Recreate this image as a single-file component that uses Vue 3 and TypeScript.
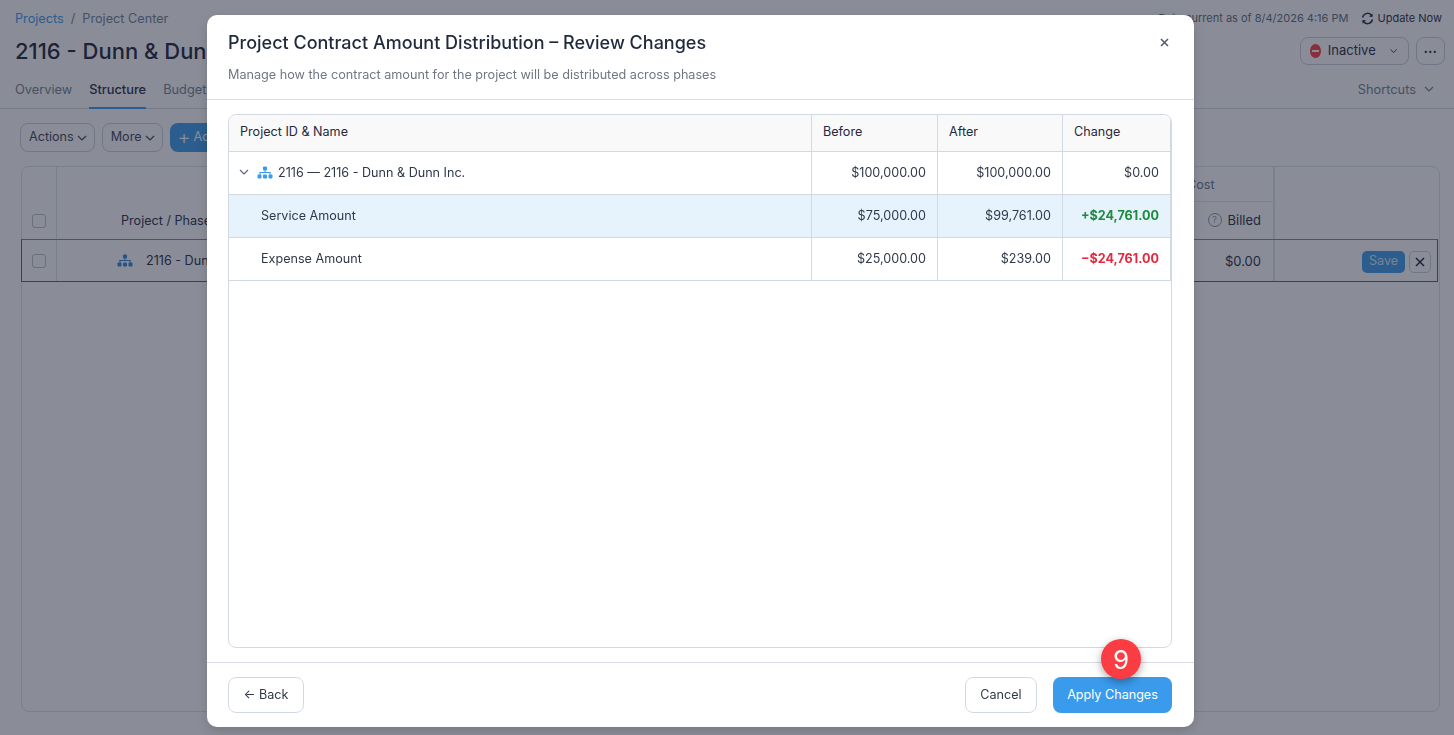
<template>
  <div class="page">
    <div class="top">
      <div class="crumbs">
        <a class="link">Projects</a>
        <span class="sep">/</span>
        <span>Project Center</span>
      </div>
      <div class="sync">
        <span class="current">Data current as of 8/4/2026 4:16 PM</span>
        <span class="update">
          <svg width="13" height="13" viewBox="0 0 16 16" fill="none" stroke="currentColor" stroke-width="1.800">
            <path d="M2 7a6 6 0 0 1 10.500-3.200L14 5.500M14 9a6 6 0 0 1-10.500 3.200L2 10.500" />
            <path d="M14 1.500v4.200H9.800M2 14.500v-4.200h4.200" fill="currentColor" stroke="none" />
          </svg>
          Update Now
        </span>
      </div>
    </div>
    <div class="title-row">
      <h1>2116 - Dunn &amp; Dunn Inc.</h1>
      <div class="title-actions">
        <button class="status">
          <span class="dot"><i /></span>
          Inactive
          <svg class="chev wide" viewBox="0 0 12 12"><path d="M2 4l4 4 4-4" /></svg>
        </button>
        <button class="dots">•••</button>
      </div>
    </div>
    <div class="tabs">
      <span v-for="t in tabs" :key="t" class="tab" :class="{ active: t === 'Structure' }">{{ t }}</span>
      <span class="shortcuts">
        Shortcuts
        <svg class="chev wide" viewBox="0 0 12 12"><path d="M2 4l4 4 4-4" /></svg>
      </span>
    </div>
    <div class="toolbar">
      <button class="tool">Actions <svg class="chev" viewBox="0 0 12 12"><path d="M2 4l4 4 4-4" /></svg></button>
      <button class="tool">More <svg class="chev" viewBox="0 0 12 12"><path d="M2 4l4 4 4-4" /></svg></button>
      <button class="add"><span class="plus">+</span> Add Phase</button>
    </div>
    <div class="grid-card">
      <div class="grid-head">
        <div class="g-check"><span class="box" /></div>
        <div class="g-name">Project / Phase</div>
        <div class="g-cost">
          <div class="cost-label">Cost</div>
          <div class="cost-sub">
            <span class="help">?</span>
            Billed
          </div>
        </div>
        <div class="g-actions" />
      </div>
      <div class="grid-row">
        <div class="g-check"><span class="box" /></div>
        <div class="g-name row-name">
          <svg class="tree" width="16" height="13" viewBox="0 0 16 13" fill="currentColor">
            <rect x="6" y="0.500" width="4" height="4" rx="1" />
            <rect x="7.500" y="4" width="1" height="3" />
            <rect x="2.500" y="6" width="11" height="1" />
            <rect x="2.500" y="6" width="1" height="3" />
            <rect x="12.500" y="6" width="1" height="3" />
            <rect x="0.500" y="8.500" width="4" height="4" rx="1" />
            <rect x="6" y="8.500" width="4" height="4" rx="1" />
            <rect x="11.500" y="8.500" width="4" height="4" rx="1" />
          </svg>
          2116 - Dunn &amp; Dunn Inc.
        </div>
        <div class="g-cost row-cost">$0.00</div>
        <div class="g-actions row-actions">
          <button class="save">Save</button>
          <button class="close-row">
            <svg width="10" height="10" viewBox="0 0 10 10" stroke="currentColor" stroke-width="1.500"><path d="M1 1l8 8M9 1l-8 8" /></svg>
          </button>
        </div>
      </div>
    </div>
  </div>

  <div class="backdrop" />

  <div class="modal">
    <header class="m-head">
      <h2>Project Contract Amount Distribution – Review Changes</h2>
      <p>Manage how the contract amount for the project will be distributed across phases</p>
      <svg class="m-close" width="9" height="9" viewBox="0 0 9 9" stroke="currentColor" stroke-width="1.500"><path d="M1 1l7 7M8 1l-7 7" /></svg>
    </header>
    <div class="m-body">
      <div class="table-wrap">
        <table>
          <colgroup>
            <col class="c1" />
            <col class="c2" />
            <col class="c3" />
            <col class="c4" />
          </colgroup>
          <thead>
            <tr>
              <th>Project ID &amp; Name</th>
              <th>Before</th>
              <th>After</th>
              <th>Change</th>
            </tr>
          </thead>
          <tbody>
            <tr v-for="r in rows" :key="r.name" :class="{ hl: r.highlight }">
              <td>
                <div v-if="r.parent" class="parent">
                  <svg class="chev parent-chev" viewBox="0 0 12 12"><path d="M2 4l4 4 4-4" /></svg>
                  <svg class="tree blue" width="16" height="13" viewBox="0 0 16 13" fill="currentColor">
                    <rect x="6" y="0.500" width="4" height="4" rx="1" />
                    <rect x="7.500" y="4" width="1" height="3" />
                    <rect x="2.500" y="6" width="11" height="1" />
                    <rect x="2.500" y="6" width="1" height="3" />
                    <rect x="12.500" y="6" width="1" height="3" />
                    <rect x="0.500" y="8.500" width="4" height="4" rx="1" />
                    <rect x="6" y="8.500" width="4" height="4" rx="1" />
                    <rect x="11.500" y="8.500" width="4" height="4" rx="1" />
                  </svg>
                  <span>{{ r.name }}</span>
                </div>
                <span v-else class="child">{{ r.name }}</span>
              </td>
              <td class="num">{{ r.before }}</td>
              <td class="num">{{ r.after }}</td>
              <td class="num" :class="r.tone">{{ r.change }}</td>
            </tr>
          </tbody>
        </table>
      </div>
    </div>
    <footer class="m-foot">
      <button class="btn back">← Back</button>
      <div class="foot-right">
        <button class="btn cancel">Cancel</button>
        <div class="apply-wrap">
          <span class="badge">9</span>
          <button class="btn apply">Apply Changes</button>
        </div>
      </div>
    </footer>
  </div>
</template>

<script setup lang="ts">
interface Row {
  name: string
  before: string
  after: string
  change: string
  parent?: boolean
  highlight?: boolean
  tone?: string
}

const tabs = ['Overview', 'Structure', 'Budget']

const rows: Row[] = [
  { name: '2116 — 2116 - Dunn & Dunn Inc.', before: '$100,000.00', after: '$100,000.00', change: '$0.00', parent: true },
  { name: 'Service Amount', before: '$75,000.00', after: '$99,761.00', change: '+$24,761.00', highlight: true, tone: 'up' },
  { name: 'Expense Amount', before: '$25,000.00', after: '$239.00', change: '−$24,761.00', tone: 'down' },
]
</script>

<style>
html,
body {
  margin: 0;
  overflow: hidden;
}
</style>

<style scoped>
* {
  box-sizing: border-box;
}

button {
  font-family: inherit;
}

.page {
  height: 735px;
  background: #fff;
  color: #1f2a44;
  font-family: Inter, "Liberation Sans", sans-serif;
  font-size: 12.600px;
  overflow: hidden;
}

.top {
  display: flex;
  justify-content: space-between;
  align-items: center;
  height: 18px;
  margin-top: 9px;
  padding: 0 12px 0 15px;
}

.crumbs {
  display: flex;
  gap: 7px;
  font-size: 12.700px;
  color: #707f94;
}

.link {
  color: #3a9bec;
}

.sync {
  display: flex;
  gap: 13px;
  font-size: 11px;
  color: #5d6a80;
}

.update {
  display: flex;
  align-items: center;
  gap: 3px;
  color: #1f2a44;
}

.title-row {
  display: flex;
  justify-content: space-between;
  align-items: center;
  height: 38px;
  margin-top: 5px;
  padding: 0 9px 0 15px;
}

h1 {
  margin: 0;
  font-size: 22px;
  font-weight: 500;
  color: #1a2238;
}

.title-actions {
  display: flex;
  gap: 7px;
}

.status {
  display: flex;
  align-items: center;
  width: 109px;
  height: 28px;
  padding: 0 10px 2px 9px;
  gap: 7px;
  border: 1px solid #c9d0dc;
  border-radius: 8px;
  background: #fff;
  color: #1f2a44;
  font-size: 13px;
}

.status .chev {
  margin-left: 6px;
  margin-top: 2px;
}

.dot {
  display: flex;
  align-items: center;
  justify-content: center;
  width: 14px;
  height: 14px;
  margin-top: 2px;
  border-radius: 50%;
  background: #ff3a46;
}

.dot i {
  width: 7px;
  height: 2px;
  background: #fff;
}

.dots {
  width: 29px;
  height: 28px;
  padding: 0;
  border: 1px solid #c9d0dc;
  border-radius: 8px;
  background: #fff;
  color: #1f2a44;
  font-size: 7px;
  letter-spacing: 0.500px;
}

.tabs {
  display: flex;
  align-items: center;
  height: 38px;
  margin-top: 1px;
  padding: 0 19px 0 15px;
  gap: 17px;
  border-bottom: 1px solid #d5dae3;
  color: #707f94;
  font-size: 12.800px;
}

.tab {
  display: flex;
  align-items: center;
  height: 38px;
  padding-top: 2px;
  border-bottom: 2px solid transparent;
}

.tab.active {
  border-bottom-color: #3a9bec;
  color: #1f2a44;
  font-weight: 500;
}

.shortcuts {
  display: flex;
  align-items: center;
  gap: 7px;
  margin-left: auto;
  padding-bottom: 1px;
}

.chev {
  width: 12px;
  height: 12px;
  fill: none;
  stroke: currentColor;
  stroke-width: 1.200;
}

.toolbar {
  display: flex;
  gap: 7px;
  padding: 14px 0 0 20px;
}

.tool {
  display: flex;
  align-items: center;
  gap: 2px;
  height: 29px;
  padding: 0 7px 2px 8px;
  border: 1px solid #c9d0dc;
  border-radius: 8px;
  background: #fff;
  color: #38445c;
  font-size: 12.600px;
}

.tool .chev {
  margin: 2px -1px 0 0;
}

.add {
  display: flex;
  align-items: center;
  gap: 3px;
  height: 29px;
  padding: 0 8px 2px;
  border: 0;
  border-radius: 8px;
  background: #3a9bec;
  color: #fff;
  font-size: 12.600px;
}

.plus {
  font-size: 20px;
  font-weight: 300;
  line-height: 1;
}

.grid-card {
  height: 546px;
  margin: 14px 14px 0 21px;
  border: 1px solid #dde1e8;
  border-radius: 8px;
}

.grid-head {
  display: flex;
  height: 72px;
}

.grid-row {
  display: flex;
  height: 43px;
  margin-left: -1px;
  margin-right: 1px;
  border: 1px solid #596172;
  border-top-color: #5b8fc4;
}

.g-check {
  display: flex;
  justify-content: center;
  align-items: flex-end;
  width: 35px;
  flex: none;
  border-right: 1px solid #dde1e8;
  padding-bottom: 11px;
}

.grid-row .g-check {
  width: 35px;
  align-items: center;
  padding-bottom: 0;
}

.box {
  width: 14px;
  height: 14px;
  border: 1px solid #b9c0cc;
  border-radius: 3px;
}

.g-name {
  display: flex;
  flex: 1;
  align-items: flex-end;
  padding: 0 0 11px 64px;
  color: #1f2a44;
}

.row-name {
  align-items: center;
  padding: 0 0 0 60px;
  gap: 13px;
}

.tree {
  color: #2f86d9;
  flex: none;
}

.tree.blue {
  color: #3a9bec;
}

.g-cost {
  width: 180px;
  flex: none;
  border-right: 2px solid #e0e4ea;
}

.cost-label {
  height: 35px;
  padding: 10px 0 0 92px;
  border-bottom: 1px solid #e6e9ee;
  color: #6a7588;
}

.cost-sub {
  display: flex;
  justify-content: flex-end;
  align-items: center;
  gap: 6px;
  height: 37px;
  padding: 0 12px 2px 0;
  font-size: 13px;
}

.help {
  display: flex;
  align-items: center;
  justify-content: center;
  width: 14px;
  height: 14px;
  border: 1px solid #8b94a6;
  border-radius: 50%;
  color: #8b94a6;
  font-size: 9px;
}

.row-cost {
  display: flex;
  justify-content: flex-end;
  align-items: center;
  padding-right: 12px;
  font-size: 13px;
}

.g-actions {
  width: 164px;
  flex: none;
}

.row-actions {
  display: flex;
  justify-content: flex-end;
  align-items: center;
  gap: 4px;
  width: 162px;
  padding: 2px 6px 0 0;
}

.save {
  width: 43px;
  height: 22px;
  padding: 0 0 2px;
  border: 0;
  border-radius: 5px;
  background: #3a9bec;
  color: #d7e9fa;
  font-size: 12.600px;
}

.close-row {
  display: flex;
  align-items: center;
  justify-content: center;
  width: 22px;
  height: 22px;
  padding: 0;
  border: 1px solid #c9d0dc;
  border-radius: 5px;
  background: #fff;
  color: #1a2238;
}

.backdrop {
  position: fixed;
  inset: 0;
  background: rgba(30, 36, 56, 0.52);
}

.modal {
  position: fixed;
  left: 207px;
  top: 15px;
  display: flex;
  flex-direction: column;
  width: 987px;
  height: 712px;
  border-radius: 10px;
  background: #fff;
  box-shadow: 0 4px 12px rgba(0, 0, 0, 0.15);
  color: #1f2a44;
  font-family: Inter, "Liberation Sans", sans-serif;
  font-size: 12.600px;
}

.m-head {
  position: relative;
  height: 85px;
  padding: 17px 21px 0;
  border-bottom: 1px solid #d9dde5;
}

h2 {
  margin: 0;
  font-size: 18px;
  font-weight: 500;
  line-height: 22px;
  color: #1f2a3d;
}

.m-head p {
  margin: 13px 0 0;
  font-size: 12.650px;
  line-height: 16px;
  color: #6f7782;
}

.m-close {
  position: absolute;
  right: 25px;
  top: 23px;
  color: #50586a;
}

.m-body {
  flex: 1;
  padding: 14px 22px 14px 21px;
  border-bottom: 1px solid #d9dde5;
}

.table-wrap {
  height: 100%;
  border: 1px solid #d3d9e3;
  border-radius: 8px;
  overflow: hidden;
}

table {
  width: 942px;
  border-collapse: separate;
  border-spacing: 0;
  table-layout: fixed;
}

.c1 {
  width: 583px;
}

.c2 {
  width: 126px;
}

.c3 {
  width: 125px;
}

.c4 {
  width: 108px;
}

th,
td {
  border-right: 1px solid #d3d9e3;
  border-bottom: 1px solid #d3d9e3;
}

th {
  height: 37px;
  padding: 0 11px 3px;
  background: #f9f9f9;
  font-weight: 400;
  text-align: left;
  color: #1f2a3d;
}

td {
  height: 43px;
  padding: 0 11px 2px 11px;
  color: #2f3849;
}

tr.hl td {
  background: #e6f3fd;
}

.parent {
  display: flex;
  align-items: center;
}

.parent-chev {
  flex: none;
  margin: 0 7px 0 -2px;
  color: #5f6878;
}

.parent .tree {
  margin-right: 5px;
}

.child {
  padding-left: 21px;
}

.num {
  text-align: right;
}

.up {
  font-weight: 700;
  color: #1d8a3d;
}

.down {
  font-weight: 700;
  color: #e5283f;
}

.m-foot {
  display: flex;
  justify-content: space-between;
  align-items: flex-start;
  height: 64px;
  padding: 14px 22px 0 21px;
}

.foot-right {
  display: flex;
  gap: 16px;
}

.btn {
  height: 36px;
  padding: 0 0 2px;
  border: 1px solid #d3d9e3;
  border-radius: 8px;
  background: #fff;
  color: #2f3849;
  font-size: 12.600px;
}

.back {
  width: 76px;
}

.cancel {
  width: 72px;
}

.apply-wrap {
  position: relative;
}

.apply {
  width: 119px;
  border: 0;
  background: #3a9bec;
  color: #fff;
}

.badge {
  position: absolute;
  left: 48px;
  top: -38px;
  display: flex;
  align-items: center;
  justify-content: center;
  width: 40px;
  height: 40px;
  border-radius: 50%;
  background: #fb3c42;
  box-shadow: 0 3px 9px rgba(0, 0, 0, 0.35);
  color: #fff;
  font-size: 26px;
  font-weight: 400;
}
</style>
